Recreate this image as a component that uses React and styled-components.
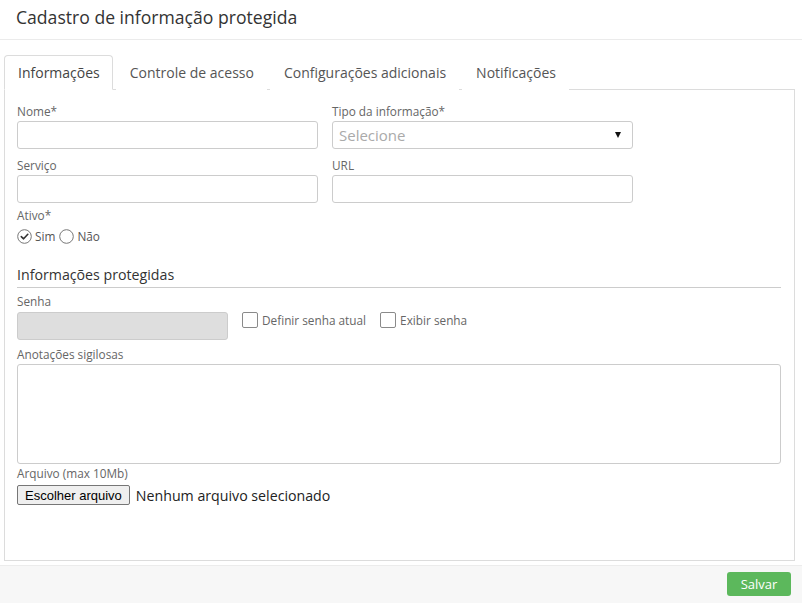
import React from 'react';
import styled, { createGlobalStyle } from 'styled-components';

const GlobalStyle = createGlobalStyle`
  html, body {
    margin: 0;
    padding: 0;
    background: #fff;
  }
  body {
    font-family: 'Open Sans', 'Liberation Sans', sans-serif;
    color: #333;
  }
  * {
    box-sizing: border-box;
  }
`;

const Page = styled.div`
  display: flex;
  flex-direction: column;
  height: 603px;
`;

const Header = styled.div`
  height: 40px;
  padding: 0 16px 5px;
  display: flex;
  align-items: center;
  border-bottom: 1px solid #ebebeb;
`;

const Title = styled.h1`
  margin: 0;
  font-size: 17.6px;
  font-weight: 400;
  color: #333;
`;

const Body = styled.div`
  flex: 1;
  display: flex;
  flex-direction: column;
  padding: 15px 7px 4px 4px;
`;

const TabList = styled.div`
  display: flex;
  gap: 3px;
  height: 35px;
  position: relative;
  z-index: 1;
`;

const Tab = styled.div`
  display: flex;
  align-items: center;
  padding: 0 12px 0 13px;
  font-size: 14px;
  color: ${p => (p.active ? '#444' : '#555')};
  border: 1px solid ${p => (p.active ? '#dcdcdc' : 'transparent')};
  border-bottom-color: ${p => (p.active ? '#fff' : 'transparent')};
  border-radius: 4px 4px 0 0;
  background: #fff;
  cursor: pointer;
`;

const Panel = styled.div`
  flex: 1;
  margin-top: -1px;
  border: 1px solid #dcdcdc;
  padding: 13px 13px 0 12px;
`;

const Grid = styled.div`
  display: grid;
  grid-template-columns: 301px 301px;
  column-gap: 14px;
`;

const Field = styled.div`
  display: flex;
  flex-direction: column;
  margin-bottom: ${p => p.mb ?? 8}px;
`;

const Label = styled.label`
  font-size: 11.8px;
  line-height: 16px;
  color: #666;
  margin-bottom: ${p => p.mb ?? 2}px;
`;

const Input = styled.div`
  height: 28px;
  width: ${p => p.width || '100%'};
  border: 1px solid #ccc;
  border-radius: 3px;
  background: ${p => (p.disabled ? '#dedede' : '#fff')};
`;

const Select = styled.div`
  height: 28px;
  border: 1px solid #ccc;
  border-radius: 3px;
  display: flex;
  align-items: center;
  justify-content: space-between;
  padding: 0 11px 0 6px;
  font-size: 15px;
  color: #aaa;
`;

const Caret = styled.span`
  width: 0;
  height: 0;
  border-left: 3.5px solid transparent;
  border-right: 3.5px solid transparent;
  border-top: 6px solid #111;
`;

const RadioRow = styled.div`
  display: flex;
  align-items: center;
  gap: 3px;
  height: 16px;
  font-size: 11.8px;
  color: #555;
`;

const RadioItem = styled.span`
  display: inline-flex;
  align-items: center;
  gap: 3px;
  margin-right: 1px;
`;

const SectionTitle = styled.h2`
  margin: 21px 0 0;
  font-size: 14.2px;
  font-weight: 500;
  color: #333;
  padding-bottom: 3px;
  border-bottom: 1px solid #ccc;
  line-height: 19px;
`;

const PasswordRow = styled.div`
  display: flex;
  align-items: flex-start;
`;

const CheckLabel = styled.label`
  display: inline-flex;
  align-items: center;
  gap: 4px;
  margin: 0 0 0 14px;
  font-size: 11.8px;
  color: #666;
`;

const CheckBox = styled.span`
  width: 16px;
  height: 16px;
  border: 1px solid #8a8a8a;
  border-radius: 2px;
  background: #fff;
`;

const TextArea = styled.div`
  height: 100px;
  border: 1px solid #ccc;
  border-radius: 3px;
`;

const FileRow = styled.div`
  display: flex;
  align-items: center;
  gap: 6px;
`;

const FileButton = styled.button`
  height: 20px;
  padding: 0 7px;
  font-family: 'Liberation Sans', Arial, sans-serif;
  font-size: 13px;
  color: #000;
  background: #efefef;
  border: 1px solid #767676;
  border-radius: 2px;
`;

const FileText = styled.span`
  font-size: 14.2px;
  color: #222;
`;

const Footer = styled.div`
  height: 38px;
  background: #f7f7f7;
  border-top: 1px solid #ececec;
  display: flex;
  align-items: center;
  justify-content: flex-end;
  padding: 0 11px 2px;
`;

const SaveButton = styled.button`
  height: 24px;
  width: 64px;
  border: none;
  border-radius: 3px;
  background: #5cb85c;
  color: #fff;
  font-family: inherit;
  font-size: 13px;
  font-weight: 500;
`;

function Radio({ checked }) {
  return (
    <svg width="15" height="15" viewBox="0 0 15 15">
      <circle cx="7.5" cy="7.5" r="6.8" fill="#fff" stroke="#777" strokeWidth="1" />
      {checked && (
        <path d="M4.3 7.6 L6.6 9.8 L10.8 5.3" fill="none" stroke="#333" strokeWidth="1.6" strokeLinecap="round" strokeLinejoin="round" />
      )}
    </svg>
  );
}

const tabs = ['Informações', 'Controle de acesso', 'Configurações adicionais', 'Notificações'];

export default function App() {
  return (
    <Page>
      <GlobalStyle />
      <Header>
        <Title>Cadastro de informação protegida</Title>
      </Header>
      <Body>
        <TabList>
          {tabs.map((t, i) => (
            <Tab key={t} active={i === 0}>{t}</Tab>
          ))}
        </TabList>
        <Panel>
          <Grid>
            <Field>
              <Label>Nome*</Label>
              <Input />
            </Field>
            <Field>
              <Label>Tipo da informação*</Label>
              <Select>
                Selecione
                <Caret />
              </Select>
            </Field>
            <Field mb={4}>
              <Label>Serviço</Label>
              <Input />
            </Field>
            <Field mb={4}>
              <Label>URL</Label>
              <Input />
            </Field>
          </Grid>
          <Field mb={0}>
            <Label mb={5}>Ativo*</Label>
            <RadioRow>
              <RadioItem><Radio checked />Sim</RadioItem>
              <RadioItem><Radio />Não</RadioItem>
            </RadioRow>
          </Field>
          <SectionTitle>Informações protegidas</SectionTitle>
          <Field mb={6} style={{ marginTop: 5 }}>
            <Label mb={3}>Senha</Label>
            <PasswordRow>
              <Input disabled width="211px" />
              <CheckLabel><CheckBox />Definir senha atual</CheckLabel>
              <CheckLabel><CheckBox />Exibir senha</CheckLabel>
            </PasswordRow>
          </Field>
          <Field mb={1}>
            <Label>Anotações sigilosas</Label>
            <TextArea />
          </Field>
          <Field>
            <Label mb={4}>Arquivo (max 10Mb)</Label>
            <FileRow>
              <FileButton type="button">Escolher arquivo</FileButton>
              <FileText>Nenhum arquivo selecionado</FileText>
            </FileRow>
          </Field>
        </Panel>
      </Body>
      <Footer>
        <SaveButton type="button">Salvar</SaveButton>
      </Footer>
    </Page>
  );
}
